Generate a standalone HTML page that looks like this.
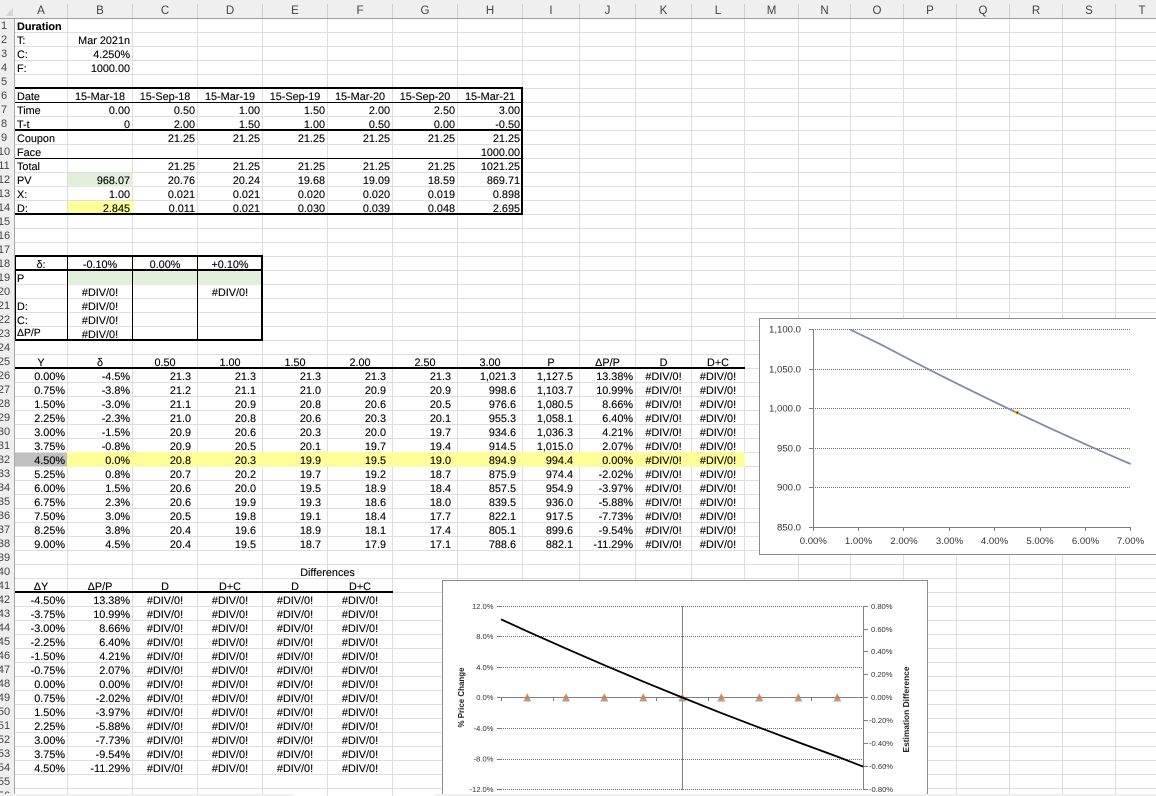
<!DOCTYPE html>
<html lang="en">
<head>
<meta charset="utf-8">
<title>Duration</title>
<style>
html,body{margin:0;padding:0;background:#fff}
#s{position:relative;width:1156px;height:796px;overflow:hidden;background:#fff;font-family:"Liberation Sans",Arial,sans-serif;color:#000}
#s>*{position:absolute}
#h{left:0;top:19px;width:1156px;height:777px;background:repeating-linear-gradient(to bottom,transparent 0 13px,#dedede 13px 14px)}
.fill{display:block}
table{left:15px;top:20px;width:1153px;table-layout:fixed;border-collapse:collapse;font-size:10.85px;text-rendering:geometricPrecision;-webkit-text-stroke:.12px #000}
tr{height:14px}
td{padding:0 3px 0 2px;height:14px;line-height:14px;text-align:right;white-space:nowrap;overflow:hidden;box-sizing:border-box}
td.l{text-align:left}
td.c,tr.c td{text-align:center}
tr.d td:nth-child(n+3):nth-child(-n+9){padding-right:7px}
tr.d td:nth-child(n+11){text-align:center}
tr.e td:nth-child(n+3){text-align:center}
#ch{left:0;top:0;width:1156px;height:18px;background:#efefef;border-bottom:1px solid #9e9e9e;font-size:11.5px;color:#444}
#ch span{position:absolute;top:4px;text-align:center;line-height:15px;border-right:1px solid #cfcfcf;height:14px;box-sizing:border-box}
#rh{left:0;top:19px;width:14px;height:777px;background:#efefef;border-right:1px solid #a8a8a8;overflow:hidden;font-size:11px;color:#444}
#rh div{position:absolute;left:-6px;width:20px;height:14px;line-height:14px;text-align:center}
#corner{left:5px;top:8px;width:0;height:0;border-style:solid;border-width:0 0 8px 8px;border-color:transparent transparent #d6d6d6 transparent}
.bar{top:794px;height:2px;background:#f0f0f0}
svg text{font-family:"Liberation Sans",Arial,sans-serif}
</style>
</head>
<body>
<div id="s">
<div id="h"></div>
<svg style="left:0;top:0" width="1156" height="796"><path d="M67.5 19V796M132.5 19V796M197.5 19V796M262.5 19V796M327.5 19V796M392.5 19V796M457.5 19V796M522.5 19V796M579.5 19V796M635.5 19V796M691.5 19V796M744.5 19V796M798.5 19V796M850.5 19V796M903.5 19V796M956.5 19V796M1009.5 19V796M1062.5 19V796M1115.5 19V796" stroke="#dedede" stroke-width="1" fill="none"/></svg>

<div class="fill" style="left:68px;top:173px;width:65px;height:14px;background:#e2efda"></div>
<div class="fill" style="left:68px;top:201px;width:65px;height:13px;background:#ffff99"></div>
<div class="fill" style="left:68px;top:271px;width:194px;height:14px;background:#e2efda"></div>
<div class="fill" style="left:15px;top:453px;width:52px;height:13px;background:#c0c0c0"></div>
<div class="fill" style="left:67px;top:452px;width:678px;height:15px;background:#ffff99"></div>

<table>
<colgroup><col style="width:53px"><col style="width:65px"><col style="width:65px"><col style="width:65px"><col style="width:65px"><col style="width:65px"><col style="width:65px"><col style="width:65px"><col style="width:57px"><col style="width:56px"><col style="width:56px"><col style="width:53px"><col style="width:54px"><col style="width:52px"><col style="width:53px"><col style="width:53px"><col style="width:53px"><col style="width:53px"><col style="width:53px"><col style="width:53px"></colgroup>
<tr><td class="l" style="font-weight:bold" colspan="2">Duration</td></tr>
<tr><td class="l">T:</td><td>Mar 2021n</td></tr>
<tr><td class="l">C:</td><td>4.250%</td></tr>
<tr><td class="l">F:</td><td>1000.00</td></tr>
<tr><td></td></tr>
<tr class="c"><td style="text-align:left">Date</td><td>15-Mar-18</td><td>15-Sep-18</td><td>15-Mar-19</td><td>15-Sep-19</td><td>15-Mar-20</td><td>15-Sep-20</td><td>15-Mar-21</td></tr>
<tr><td class="l">Time</td><td>0.00</td><td>0.50</td><td>1.00</td><td>1.50</td><td>2.00</td><td>2.50</td><td>3.00</td></tr>
<tr><td class="l">T-t</td><td>0</td><td>2.00</td><td>1.50</td><td>1.00</td><td>0.50</td><td>0.00</td><td>-0.50</td></tr>
<tr><td class="l">Coupon</td><td></td><td>21.25</td><td>21.25</td><td>21.25</td><td>21.25</td><td>21.25</td><td>21.25</td></tr>
<tr><td class="l">Face</td><td></td><td></td><td></td><td></td><td></td><td></td><td>1000.00</td></tr>
<tr><td class="l">Total</td><td></td><td>21.25</td><td>21.25</td><td>21.25</td><td>21.25</td><td>21.25</td><td>1021.25</td></tr>
<tr><td class="l">PV</td><td>968.07</td><td>20.76</td><td>20.24</td><td>19.68</td><td>19.09</td><td>18.59</td><td>869.71</td></tr>
<tr><td class="l">X:</td><td>1.00</td><td>0.021</td><td>0.021</td><td>0.020</td><td>0.020</td><td>0.019</td><td>0.898</td></tr>
<tr><td class="l">D:</td><td>2.845</td><td>0.011</td><td>0.021</td><td>0.030</td><td>0.039</td><td>0.048</td><td>2.695</td></tr>
<tr><td></td></tr>
<tr><td></td></tr>
<tr><td></td></tr>
<tr class="c"><td>δ:</td><td>-0.10%</td><td>0.00%</td><td>+0.10%</td></tr>
<tr><td class="l">P</td></tr>
<tr class="c"><td></td><td>#DIV/0!</td><td></td><td>#DIV/0!</td></tr>
<tr class="c"><td style="text-align:left">D:</td><td>#DIV/0!</td></tr>
<tr class="c"><td style="text-align:left">C:</td><td>#DIV/0!</td></tr>
<tr class="c"><td style="text-align:left;font-size:10.4px;line-height:12px;vertical-align:top">ΔP/P</td><td>#DIV/0!</td></tr>
<tr><td></td></tr>
<tr class="c"><td>Y</td><td>δ</td><td>0.50</td><td>1.00</td><td>1.50</td><td>2.00</td><td>2.50</td><td>3.00</td><td>P</td><td>ΔP/P</td><td>D</td><td>D+C</td></tr>
<tr class="d"><td>0.00%</td><td>-4.5%</td><td>21.3</td><td>21.3</td><td>21.3</td><td>21.3</td><td>21.3</td><td>1,021.3</td><td>1,127.5</td><td>13.38%</td><td>#DIV/0!</td><td>#DIV/0!</td></tr>
<tr class="d"><td>0.75%</td><td>-3.8%</td><td>21.2</td><td>21.1</td><td>21.0</td><td>20.9</td><td>20.9</td><td>998.6</td><td>1,103.7</td><td>10.99%</td><td>#DIV/0!</td><td>#DIV/0!</td></tr>
<tr class="d"><td>1.50%</td><td>-3.0%</td><td>21.1</td><td>20.9</td><td>20.8</td><td>20.6</td><td>20.5</td><td>976.6</td><td>1,080.5</td><td>8.66%</td><td>#DIV/0!</td><td>#DIV/0!</td></tr>
<tr class="d"><td>2.25%</td><td>-2.3%</td><td>21.0</td><td>20.8</td><td>20.6</td><td>20.3</td><td>20.1</td><td>955.3</td><td>1,058.1</td><td>6.40%</td><td>#DIV/0!</td><td>#DIV/0!</td></tr>
<tr class="d"><td>3.00%</td><td>-1.5%</td><td>20.9</td><td>20.6</td><td>20.3</td><td>20.0</td><td>19.7</td><td>934.6</td><td>1,036.3</td><td>4.21%</td><td>#DIV/0!</td><td>#DIV/0!</td></tr>
<tr class="d"><td>3.75%</td><td>-0.8%</td><td>20.9</td><td>20.5</td><td>20.1</td><td>19.7</td><td>19.4</td><td>914.5</td><td>1,015.0</td><td>2.07%</td><td>#DIV/0!</td><td>#DIV/0!</td></tr>
<tr class="d"><td>4.50%</td><td>0.0%</td><td>20.8</td><td>20.3</td><td>19.9</td><td>19.5</td><td>19.0</td><td>894.9</td><td>994.4</td><td>0.00%</td><td>#DIV/0!</td><td>#DIV/0!</td></tr>
<tr class="d"><td>5.25%</td><td>0.8%</td><td>20.7</td><td>20.2</td><td>19.7</td><td>19.2</td><td>18.7</td><td>875.9</td><td>974.4</td><td>-2.02%</td><td>#DIV/0!</td><td>#DIV/0!</td></tr>
<tr class="d"><td>6.00%</td><td>1.5%</td><td>20.6</td><td>20.0</td><td>19.5</td><td>18.9</td><td>18.4</td><td>857.5</td><td>954.9</td><td>-3.97%</td><td>#DIV/0!</td><td>#DIV/0!</td></tr>
<tr class="d"><td>6.75%</td><td>2.3%</td><td>20.6</td><td>19.9</td><td>19.3</td><td>18.6</td><td>18.0</td><td>839.5</td><td>936.0</td><td>-5.88%</td><td>#DIV/0!</td><td>#DIV/0!</td></tr>
<tr class="d"><td>7.50%</td><td>3.0%</td><td>20.5</td><td>19.8</td><td>19.1</td><td>18.4</td><td>17.7</td><td>822.1</td><td>917.5</td><td>-7.73%</td><td>#DIV/0!</td><td>#DIV/0!</td></tr>
<tr class="d"><td>8.25%</td><td>3.8%</td><td>20.4</td><td>19.6</td><td>18.9</td><td>18.1</td><td>17.4</td><td>805.1</td><td>899.6</td><td>-9.54%</td><td>#DIV/0!</td><td>#DIV/0!</td></tr>
<tr class="d"><td>9.00%</td><td>4.5%</td><td>20.4</td><td>19.5</td><td>18.7</td><td>17.9</td><td>17.1</td><td>788.6</td><td>882.1</td><td>-11.29%</td><td>#DIV/0!</td><td>#DIV/0!</td></tr>
<tr><td></td></tr>
<tr class="c"><td></td><td></td><td></td><td></td><td colspan="2">Differences</td></tr>
<tr class="c"><td>ΔY</td><td>ΔP/P</td><td>D</td><td>D+C</td><td>D</td><td>D+C</td></tr>
<tr class="e"><td>-4.50%</td><td>13.38%</td><td>#DIV/0!</td><td>#DIV/0!</td><td>#DIV/0!</td><td>#DIV/0!</td></tr>
<tr class="e"><td>-3.75%</td><td>10.99%</td><td>#DIV/0!</td><td>#DIV/0!</td><td>#DIV/0!</td><td>#DIV/0!</td></tr>
<tr class="e"><td>-3.00%</td><td>8.66%</td><td>#DIV/0!</td><td>#DIV/0!</td><td>#DIV/0!</td><td>#DIV/0!</td></tr>
<tr class="e"><td>-2.25%</td><td>6.40%</td><td>#DIV/0!</td><td>#DIV/0!</td><td>#DIV/0!</td><td>#DIV/0!</td></tr>
<tr class="e"><td>-1.50%</td><td>4.21%</td><td>#DIV/0!</td><td>#DIV/0!</td><td>#DIV/0!</td><td>#DIV/0!</td></tr>
<tr class="e"><td>-0.75%</td><td>2.07%</td><td>#DIV/0!</td><td>#DIV/0!</td><td>#DIV/0!</td><td>#DIV/0!</td></tr>
<tr class="e"><td>0.00%</td><td>0.00%</td><td>#DIV/0!</td><td>#DIV/0!</td><td>#DIV/0!</td><td>#DIV/0!</td></tr>
<tr class="e"><td>0.75%</td><td>-2.02%</td><td>#DIV/0!</td><td>#DIV/0!</td><td>#DIV/0!</td><td>#DIV/0!</td></tr>
<tr class="e"><td>1.50%</td><td>-3.97%</td><td>#DIV/0!</td><td>#DIV/0!</td><td>#DIV/0!</td><td>#DIV/0!</td></tr>
<tr class="e"><td>2.25%</td><td>-5.88%</td><td>#DIV/0!</td><td>#DIV/0!</td><td>#DIV/0!</td><td>#DIV/0!</td></tr>
<tr class="e"><td>3.00%</td><td>-7.73%</td><td>#DIV/0!</td><td>#DIV/0!</td><td>#DIV/0!</td><td>#DIV/0!</td></tr>
<tr class="e"><td>3.75%</td><td>-9.54%</td><td>#DIV/0!</td><td>#DIV/0!</td><td>#DIV/0!</td><td>#DIV/0!</td></tr>
<tr class="e"><td>4.50%</td><td>-11.29%</td><td>#DIV/0!</td><td>#DIV/0!</td><td>#DIV/0!</td><td>#DIV/0!</td></tr>
</table>

<svg style="left:0;top:0" width="1156" height="796" fill="#000" shape-rendering="crispEdges">
<!-- table 1 -->
<rect x="15" y="87" width="508" height="2"/>
<rect x="15" y="102" width="507" height="1"/>
<rect x="15" y="129" width="507" height="2"/>
<rect x="15" y="158" width="507" height="1"/>
<rect x="15" y="213" width="508" height="2"/>
<rect x="521" y="87" width="2" height="128"/>
<!-- table 2 -->
<rect x="15" y="255" width="248" height="2"/>
<rect x="15" y="269" width="248" height="2"/>
<rect x="15" y="339" width="248" height="2"/>
<rect x="15" y="255" width="1" height="86"/>
<rect x="67" y="255" width="1" height="86"/>
<rect x="132" y="255" width="1" height="86"/>
<rect x="197" y="255" width="1" height="86"/>
<rect x="261" y="255" width="2" height="86"/>
<!-- table 3 / 4 rules -->
<rect x="15" y="367" width="730" height="2"/>
<rect x="15" y="591" width="378" height="2"/>
</svg>

<!-- chart 1 -->
<svg style="left:759px;top:318px" width="397" height="237" viewBox="759 318 397 237">
<rect x="759.5" y="318.5" width="420" height="236" fill="#fff" stroke="#8c8c8c" stroke-width="1"/>
<g stroke="#6e6e6e" stroke-width="1" stroke-dasharray="1 1" fill="none">
<path d="M813 329.5H1131M813 369.5H1131M813 408.5H1131M813 448.5H1131M813 487.5H1131"/>
</g>
<path d="M813.5 329V527.5H1131M809 329.5H813M809 369.5H813M809 408.5H813M809 448.5H813M809 487.5H813M809 527.5H813M813.5 527V531M858.5 527V531M903.5 527V531M949.5 527V531M994.5 527V531M1040.5 527V531M1085.5 527V531M1130.5 527V531" stroke="#808080" stroke-width="1" fill="none"/>
<path d="M850 329.5L881.3 344.7L915.3 362.5L949.3 379.8L983.3 396.6L1017.3 412.9L1051.3 428.8L1085.3 444.2L1119.3 459.2L1130.7 464" fill="none" stroke="#7e8ca6" stroke-width="1.8"/>
<circle cx="1017.4" cy="412.6" r="2" fill="#ffc000"/>
<circle cx="1017.4" cy="412.6" r="1" fill="#222"/>
<g font-size="9.6" fill="#333" text-anchor="end">
<text x="801" y="332.5">1,100.0</text>
<text x="801" y="372.5">1,050.0</text>
<text x="801" y="411.5">1,000.0</text>
<text x="801" y="451.5">950.0</text>
<text x="801" y="490.5">900.0</text>
<text x="801" y="530.5">850.0</text>
</g>
<g font-size="9.6" fill="#333" text-anchor="middle">
<text x="813.3" y="544">0.00%</text>
<text x="858.5" y="544">1.00%</text>
<text x="904" y="544">2.00%</text>
<text x="949.5" y="544">3.00%</text>
<text x="994.5" y="544">4.00%</text>
<text x="1040" y="544">5.00%</text>
<text x="1085.5" y="544">6.00%</text>
<text x="1130.5" y="544">7.00%</text>
</g>
</svg>

<!-- chart 2 -->
<svg style="left:442px;top:580px" width="487" height="216" viewBox="442 580 487 216">
<rect x="442.5" y="580.5" width="485" height="240" fill="#fff" stroke="#8c8c8c" stroke-width="1"/>
<g stroke="#6e6e6e" stroke-width="1" stroke-dasharray="1 1" fill="none">
<path d="M501 606.5H863M501 636.5H863M501 667.5H863M501 728.5H863M501 759.5H863M501 789.5H863"/>
</g>
<path d="M682.5 606V790M863.5 606V790M864 606.5H868M864 629.5H868M864 651.5H868M864 674.5H868M864 697.5H868M864 720.5H868M864 743.5H868M864 766.5H868M864 789.5H868M497 606.5H501M497 636.5H501M497 667.5H501M497 697.5H501M497 728.5H501M497 759.5H501M497 789.5H501" stroke="#808080" stroke-width="1" fill="none"/>
<path d="M501 697.5H863M501.5 697V701M553.5 697V701M604.5 697V701M656.5 697V701M708.5 697V701M760.5 697V701M811.5 697V701" stroke="#808080" stroke-width="1" fill="none"/>
<g fill="#a5a5a5">
<path d="M527.3 693L531.3 701.5H523.3Z"/><path d="M566 693L570 701.5H562Z"/><path d="M604.3 693L608.3 701.5H600.3Z"/><path d="M643.3 693L647.3 701.5H639.3Z"/><path d="M682.3 693L686.3 701.5H678.3Z"/><path d="M721.3 693L725.3 701.5H717.3Z"/><path d="M759.3 693L763.3 701.5H755.3Z"/><path d="M798.3 693L802.3 701.5H794.3Z"/><path d="M837.3 693L841.3 701.5H833.3Z"/>
</g>
<g fill="#ed7d31">
<circle cx="527.3" cy="697.5" r="2"/><circle cx="566" cy="697.5" r="2"/><circle cx="604.3" cy="697.5" r="2"/><circle cx="643.3" cy="697.5" r="2"/><circle cx="682.3" cy="697.5" r="2"/><circle cx="721.3" cy="697.5" r="2"/><circle cx="759.3" cy="697.5" r="2"/><circle cx="798.3" cy="697.5" r="2"/><circle cx="837.3" cy="697.5" r="2"/>
</g>
<path d="M501 619.3L527.2 631.3L566 648.6L604.7 665.3L643.5 681.7L682.3 697.5L721 712.9L759.9 727.8L798.6 742.4L837.4 756.6L863.3 766.7" fill="none" stroke="#000" stroke-width="1.8"/>
<g font-size="7.6" fill="#333" text-anchor="end">
<text x="493.5" y="609">12.0%</text>
<text x="493.5" y="639">8.0%</text>
<text x="493.5" y="670">4.0%</text>
<text x="493.5" y="700">0.0%</text>
<text x="493.5" y="731">-4.0%</text>
<text x="493.5" y="761.5">-8.0%</text>
<text x="493.5" y="792">-12.0%</text>
</g>
<g font-size="7.6" fill="#333">
<text x="871" y="609">0.80%</text>
<text x="871" y="632">0.60%</text>
<text x="871" y="654">0.40%</text>
<text x="871" y="677">0.20%</text>
<text x="871" y="700">0.00%</text>
<text x="869" y="723">-0.20%</text>
<text x="869" y="746">-0.40%</text>
<text x="869" y="769">-0.60%</text>
<text x="869" y="792">-0.80%</text>
</g>
<text transform="translate(464 697.5) rotate(-90)" font-size="8.4" font-weight="bold" fill="#222" text-anchor="middle" textLength="60" lengthAdjust="spacingAndGlyphs">% Price Change</text>
<text transform="translate(909 709.5) rotate(-90)" font-size="8.4" font-weight="bold" fill="#222" text-anchor="middle" textLength="86" lengthAdjust="spacingAndGlyphs">Estimation Difference</text>
</svg>

<div id="ch">
<span style="left:15px;width:53px">A</span><span style="left:68px;width:65px">B</span><span style="left:133px;width:65px">C</span><span style="left:198px;width:65px">D</span><span style="left:263px;width:65px">E</span><span style="left:328px;width:65px">F</span><span style="left:393px;width:65px">G</span><span style="left:458px;width:65px">H</span><span style="left:523px;width:57px">I</span><span style="left:580px;width:56px">J</span><span style="left:636px;width:56px">K</span><span style="left:692px;width:53px">L</span><span style="left:745px;width:54px">M</span><span style="left:799px;width:52px">N</span><span style="left:851px;width:53px">O</span><span style="left:904px;width:53px">P</span><span style="left:957px;width:53px">Q</span><span style="left:1010px;width:53px">R</span><span style="left:1063px;width:53px">S</span><span style="left:1116px;width:53px">T</span>
</div>
<div id="rh">
<div style="top:0">1</div><div style="top:14px">2</div><div style="top:28px">3</div><div style="top:42px">4</div><div style="top:56px">5</div><div style="top:70px">6</div><div style="top:84px">7</div><div style="top:98px">8</div><div style="top:112px">9</div><div style="top:126px">10</div><div style="top:140px">11</div><div style="top:154px">12</div><div style="top:168px">13</div><div style="top:182px">14</div><div style="top:196px">15</div><div style="top:210px">16</div><div style="top:224px">17</div><div style="top:238px">18</div><div style="top:252px">19</div><div style="top:266px">20</div><div style="top:280px">21</div><div style="top:294px">22</div><div style="top:308px">23</div><div style="top:322px">24</div><div style="top:336px">25</div><div style="top:350px">26</div><div style="top:364px">27</div><div style="top:378px">28</div><div style="top:392px">29</div><div style="top:406px">30</div><div style="top:420px">31</div><div style="top:434px">32</div><div style="top:448px">33</div><div style="top:462px">34</div><div style="top:476px">35</div><div style="top:490px">36</div><div style="top:504px">37</div><div style="top:518px">38</div><div style="top:532px">39</div><div style="top:546px">40</div><div style="top:560px">41</div><div style="top:574px">42</div><div style="top:588px">43</div><div style="top:602px">44</div><div style="top:616px">45</div><div style="top:630px">46</div><div style="top:644px">47</div><div style="top:658px">48</div><div style="top:672px">49</div><div style="top:686px">50</div><div style="top:700px">51</div><div style="top:714px">52</div><div style="top:728px">53</div><div style="top:742px">54</div><div style="top:756px">55</div><div style="top:770px">56</div>
</div>
<div id="corner"></div>
<div class="bar" style="left:0;width:294px;border-top-right-radius:3px"></div>
<div class="bar" style="left:435px;width:721px;border-top-left-radius:3px"></div>
</div>
</body>
</html>
